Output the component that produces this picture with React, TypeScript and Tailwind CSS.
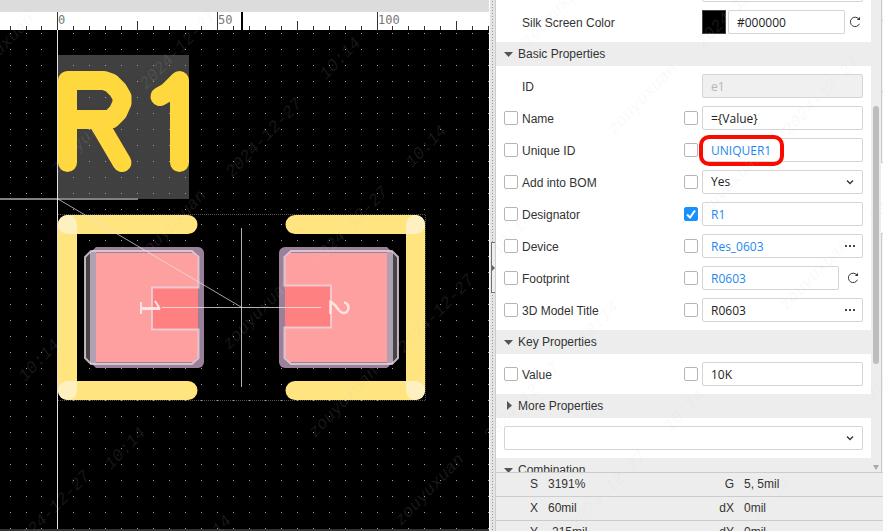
import type { ReactNode } from 'react';

const SANS = "font-['Liberation_Sans',Arial,sans-serif]";

interface Point {
  x: number;
  y: number;
}

// grid dots and ruler ticks share the same columns
const columns = Array.from({ length: 130 }, (_, i) => {
  const n = i - 3;
  const nudge = n < -1 ? 1 : n > 20 ? -1 : 0;
  return { n, x: 57 + 16 * n + nudge };
});
const rows = Array.from({ length: 90 }, (_, n) => 3 + 16 * n - (n > 11 ? 1 : 0));

function Ruler(): ReactNode {
  return (
    <svg className="block h-[18px] w-full shrink-0 bg-white" shapeRendering="crispEdges">
      {columns.map(({ n, x }) => {
        const height = n % 10 === 0 ? 18 : n % 5 === 0 ? 9 : 4;
        return <rect key={n} x={x} y={18 - height} width={1} height={height} fill="#333" />;
      })}
      {columns
        .filter(({ n }) => n >= 0 && n % 10 === 0)
        .map(({ n, x }) => (
          <text
            key={n}
            x={x + 1}
            y={12}
            fill="#777"
            className="font-['DejaVu_Sans_Mono',monospace] text-[12px]"
          >
            {n * 5}
          </text>
        ))}
      <rect x={241} y={0} width={2} height={18} fill="#000" />
    </svg>
  );
}

function Board(): ReactNode {
  return (
    <svg className="block min-h-0 w-full flex-1 bg-black">
      <rect x={58} y={25} width={131} height={144} fill="#404040" />
      <g fill="#a5a5a5" shapeRendering="crispEdges">
        {rows.map((y) =>
          columns.map(({ x }) => <rect key={`${x}-${y}`} x={x} y={y} width={1} height={1} />),
        )}
      </g>

      {/* designator strokes */}
      <g fill="none" stroke="#ffd83d" strokeWidth={19} strokeLinecap="round" strokeLinejoin="round">
        <path d="M67.500 132.500V50.500H104L111 53L118 60L122 67V73L118 82L111 89L104 89.500H67.500" />
        <path d="M97 90L122 132.500" />
        <path d="M160 66.500L168 62L179.500 50.500V132.500" />
      </g>

      {/* silk outline */}
      <path
        d="M58 184.500H425.500V370.500H58"
        fill="none"
        stroke="#555"
        strokeDasharray="1 1"
        shapeRendering="crispEdges"
      />
      <g fill="none" stroke="#ffe47f" strokeWidth={19} strokeLinecap="round" strokeLinejoin="round">
        <path d="M188 194.500H67.500V360.500H188" />
        <path d="M295 194.500H415.500V360.500H295" />
      </g>
      <g fill="#fff0c2">
        <path d="M58 194.500a9.500 9.500 0 0 1 19 0V204H67.500A9.500 9.500 0 0 1 58 194.500Z" />
        <path d="M58 360.500a9.500 9.500 0 0 0 19 0V351H67.500A9.500 9.500 0 0 0 58 360.500Z" />
        <path d="M425 194.500a9.500 9.500 0 0 0-19 0V204H415.500A9.500 9.500 0 0 0 425 194.500Z" />
        <path d="M425 360.500a9.500 9.500 0 0 1-19 0V351H415.500A9.500 9.500 0 0 1 425 360.500Z" />
      </g>

      {/* pad 1 */}
      <path d="M85 227L91 221H96V334H91L85 328Z" fill="#454545" />
      <path d="M90 223L96 217H198A6 6 0 0 1 204 223V332A6 6 0 0 1 198 338H96L90 332Z" fill="#9a8098" />
      <rect x={90} y={222} width={6} height={112} fill="#b19fb2" />
      <path d="M96 223H193L198 228V327L193 332H96Z" fill="#ffa0a0" />
      <rect x={152} y={258} width={46} height={41} fill="#ff8080" />
      <path
        d="M198.500 257.500H152V299.500H198.500V328L192 334H91L85 328V227L91 221H192L198.500 227Z"
        fill="none"
        stroke="#ead5e0"
        strokeOpacity={0.8}
        strokeWidth={2}
      />
      <g fill="none" stroke="#ffe4e4">
        <path d="M141 272V284M160 279L155 271" strokeWidth={2} />
        <path d="M141 278.500H160" strokeWidth={3} />
      </g>

      {/* pad 2 */}
      <path d="M398 227L392 221H387V334H392L398 328Z" fill="#454545" />
      <path d="M393 223L387 217H285A6 6 0 0 0 279 223V332A6 6 0 0 0 285 338H387L393 332Z" fill="#9a8098" />
      <rect x={387} y={222} width={6} height={112} fill="#b19fb2" />
      <path d="M387 223H290L285 228V327L290 332H387Z" fill="#ffa0a0" />
      <rect x={285} y={256} width={46} height={41} fill="#ff8080" />
      <path
        d="M284.500 255.500H331V297.500H284.500V328L291 334H392L398 328V227L392 221H291L284.500 227Z"
        fill="none"
        stroke="#ead5e0"
        strokeOpacity={0.8}
        strokeWidth={2}
      />
      <path
        d="M330.500 284V272C337 274 338 283 343.500 283C350 283 350 273 344 272.500"
        fill="none"
        stroke="#ffe4e4"
        strokeWidth={2.500}
      />

      {/* axes and anchor */}
      <rect x={0} y={168} width={138} height={2} fill="#808080" />
      <path d="M58 169L241 277" stroke="#e4e4e4" strokeOpacity={0.7} />
      <path d="M162 277.500H321M241.500 198V357" stroke="#eee" strokeOpacity={0.75} fill="none" />
      <rect x={57} y={0} width={1} height="100%" fill="#e6e0e0" />
    </svg>
  );
}

function Splitter(): ReactNode {
  return (
    <div className="flex w-[7px] shrink-0 items-center justify-end border-x border-l-white border-r-[#ccc] bg-[#e4e4e4] bg-[radial-gradient(circle_at_center,#999_0.5px,transparent_1px)] bg-[length:5px_3px] pt-1">
      <button
        type="button"
        aria-label="Collapse panel"
        className="flex h-[51px] w-1 items-center border-y border-l border-[#7a6f6f] bg-[#eee]"
      >
        <svg className="block h-2 w-1" viewBox="0 0 4 8">
          <path d="M0 0L4 4L0 8Z" fill="#6b6060" />
        </svg>
      </button>
    </div>
  );
}

function CheckBox({ label, checked = false }: { label: string; checked?: boolean }): ReactNode {
  return (
    <span className="grid size-3.5 shrink-0">
      <input
        type="checkbox"
        aria-label={label}
        defaultChecked={checked}
        className="peer col-start-1 row-start-1 size-3.5 appearance-none rounded-[2px] border border-[#b5b5b5] bg-white checked:border-[#1890ff] checked:bg-[#1890ff]"
      />
      <svg
        viewBox="0 0 14 14"
        className="pointer-events-none invisible col-start-1 row-start-1 size-3.5 peer-checked:visible"
      >
        <path d="M3 7.500L6 10.500L11 3.500" fill="none" stroke="#fff" strokeWidth={2} />
      </svg>
    </span>
  );
}

function RefreshIcon(): ReactNode {
  return (
    <svg viewBox="0 0 12 12" className="size-3" fill="none" stroke="#333">
      <path d="M9.800 3A4.700 4.700 0 1 0 10.400 7.800" />
      <path d="M7.800 4H11V0.800Z" fill="#333" stroke="none" />
    </svg>
  );
}

function Chevron(): ReactNode {
  return (
    <svg
      viewBox="0 0 8 6"
      className="pointer-events-none col-start-1 row-start-1 mr-[9px] h-1.5 w-2 self-center justify-self-end"
    >
      <path d="M1 1.500L4 4.500L7 1.500" fill="none" stroke="#333" strokeWidth={1.300} />
    </svg>
  );
}

const fieldBase =
  "h-6 w-full min-w-0 rounded-[2px] border border-[#d5d5d5] px-2 font-['Open_Sans','Segoe_UI',sans-serif] text-[12px] leading-4";

interface FieldProps {
  id: string;
  value: string;
  link?: boolean;
  disabled?: boolean;
}

function Field({ id, value, link, disabled }: FieldProps): ReactNode {
  const color = link
    ? 'bg-white text-[#1e88f0]'
    : disabled
      ? 'bg-[#f0f0f0] text-[#b5b5b5]'
      : 'bg-white text-[#222]';
  return (
    <input
      id={id}
      type="text"
      defaultValue={value}
      disabled={disabled}
      className={`${fieldBase} col-start-1 row-start-1 ${color}`}
    />
  );
}

function BrowseField(props: FieldProps): ReactNode {
  return (
    <div className="grid w-full">
      <Field {...props} />
      <button
        type="button"
        aria-label="Browse"
        className="col-start-1 row-start-1 mr-2 flex gap-0.5 self-center justify-self-end"
      >
        <span className="size-0.5 bg-[#444]" />
        <span className="size-0.5 bg-[#444]" />
        <span className="size-0.5 bg-[#444]" />
      </button>
    </div>
  );
}

interface SelectFieldProps {
  id: string;
  label: string;
  options: string[];
}

function SelectField({ id, label, options }: SelectFieldProps): ReactNode {
  return (
    <div className="grid w-full">
      <select
        id={id}
        aria-label={label}
        className={`${fieldBase} col-start-1 row-start-1 appearance-none bg-white text-[#222]`}
      >
        {options.map((option) => (
          <option key={option}>{option}</option>
        ))}
      </select>
      <Chevron />
    </div>
  );
}

interface PropertyRowProps {
  id: string;
  label: string;
  children: ReactNode;
  selectable?: boolean;
  checked?: boolean;
}

function PropertyRow({ id, label, children, selectable = true, checked }: PropertyRowProps): ReactNode {
  return (
    <div className="flex h-8 shrink-0 items-center px-2">
      <div className="flex w-[180px] shrink-0 items-center gap-1">
        {selectable ? <CheckBox label={`Select ${label}`} /> : <span className="w-3.5" />}
        <label htmlFor={id} className="pt-0.5">
          {label}
        </label>
      </div>
      <div className="flex min-w-0 flex-1 items-center gap-1">
        {selectable ? (
          <CheckBox label={`Show ${label}`} checked={checked} />
        ) : (
          <span className="w-3.5 shrink-0" />
        )}
        {children}
      </div>
    </div>
  );
}

function SectionHeader({ title, open = true }: { title: string; open?: boolean }): ReactNode {
  return (
    <button
      type="button"
      aria-expanded={open}
      className="flex h-6 w-full shrink-0 items-center gap-1 bg-[#ededed] pl-2 text-left"
    >
      <svg viewBox="0 0 10 10" className="size-2.5" fill="#555">
        {open ? <path d="M0 3H9L4.500 8Z" /> : <path d="M3 0V9L8 4.500Z" />}
      </svg>
      {title}
    </button>
  );
}

function SideTabs(): ReactNode {
  return (
    <div className="flex w-0.5 shrink-0 flex-col bg-[#f2f2f2]">
      <div className="h-[21px] border-b border-l border-[#ccc]" />
      <div className="h-[71px] border-b border-l border-[#ccc]" />
      <div className="h-[71px] border-b border-l border-[#ccc]" />
      <div className="h-[70px] bg-white" />
      <div className="flex-1 border-t border-l border-[#ccc]" />
    </div>
  );
}

function PropertiesPanel(): ReactNode {
  return (
    <div className="flex min-h-0 flex-1 overflow-hidden">
      <div className="flex min-w-0 flex-1 flex-col bg-white">
        <div className="flex h-1.5 shrink-0 items-end overflow-hidden">
          <div className="w-full">
            <PropertyRow id="board-color" label="" selectable={false}>
              <Field id="board-color" value="" />
            </PropertyRow>
          </div>
        </div>
        <PropertyRow id="silk-color" label="Silk Screen Color" selectable={false}>
          <div className="flex min-w-0 flex-1 gap-0.5">
            <span className="size-6 shrink-0 border border-[#444] bg-black" />
            <Field id="silk-color" value="#000000" />
          </div>
          <button type="button" aria-label="Reset color" className="mr-0.5 shrink-0">
            <RefreshIcon />
          </button>
        </PropertyRow>
        <div className="h-1 shrink-0" />

        <SectionHeader title="Basic Properties" />
        <div className="shrink-0 py-1">
          <PropertyRow id="id" label="ID" selectable={false}>
            <Field id="id" value="e1" disabled />
          </PropertyRow>
          <PropertyRow id="name" label="Name">
            <Field id="name" value="={Value}" />
          </PropertyRow>
          <PropertyRow id="unique-id" label="Unique ID">
            <div className="relative w-full">
              <Field id="unique-id" value="UNIQUER1" link />
              <span className="pointer-events-none absolute -top-[3px] -left-[3px] h-[31px] w-[85px] rounded-[10px] border-4 border-[#f90b00]" />
            </div>
          </PropertyRow>
          <PropertyRow id="bom" label="Add into BOM">
            <SelectField id="bom" label="Add into BOM" options={['Yes', 'No']} />
          </PropertyRow>
          <PropertyRow id="designator" label="Designator" checked>
            <Field id="designator" value="R1" link />
          </PropertyRow>
          <PropertyRow id="device" label="Device">
            <BrowseField id="device" value="Res_0603" link />
          </PropertyRow>
          <PropertyRow id="footprint" label="Footprint">
            <Field id="footprint" value="R0603" link />
            <button type="button" aria-label="Update footprint" className="mr-1 ml-1 shrink-0">
              <RefreshIcon />
            </button>
          </PropertyRow>
          <PropertyRow id="model" label="3D Model Title">
            <BrowseField id="model" value="R0603" />
          </PropertyRow>
        </div>

        <SectionHeader title="Key Properties" />
        <div className="shrink-0 py-1">
          <PropertyRow id="value" label="Value">
            <Field id="value" value="10K" />
          </PropertyRow>
        </div>

        <SectionHeader title="More Properties" open={false} />
        <div className="shrink-0 p-2">
          <SelectField id="more" label="More properties" options={['']} />
        </div>
        <SectionHeader title="Combination" />
      </div>

      <div className="flex w-2.5 shrink-0 flex-col items-center bg-[#ededed] pt-[106px] pb-0.5">
        <div className="h-[258px] w-1.5 shrink-0 rounded-full bg-[#bdbdbd]" />
        <svg viewBox="0 0 6 5" className="mt-auto h-[5px] w-1.5 shrink-0">
          <path d="M0 0H6L3 5Z" fill="#aaa" />
        </svg>
      </div>
      <SideTabs />
    </div>
  );
}

const status = [
  ['S', '3191%', 'G', '5, 5mil'],
  ['X', '60mil', 'dX', '0mil'],
  ['Y', '-215mil', 'dY', '0mil'],
];

function StatusPanel(): ReactNode {
  return (
    <div className="h-[59px] shrink-0 overflow-hidden bg-[#ededed]">
      {status.map(([key, value, deltaKey, delta]) => (
        <dl key={key} className="flex h-6 items-center border-t border-[#ccc] pb-0.5">
          <dt className="w-[42px] text-right">{key}</dt>
          <dd className="flex-1 pl-2.5">{value}</dd>
          <dt className="w-[42px] text-right">{deltaKey}</dt>
          <dd className="w-[149px] pl-2.5">{delta}</dd>
        </dl>
      ))}
    </div>
  );
}

const marks: { text: string; from: Point; count: number }[] = [
  { text: 'zouyuxuan', from: { x: -29, y: 86 }, count: 6 },
  { text: 'zouyuxuan', from: { x: 528, y: 47 }, count: 5 },
  { text: '2024-12-27', from: { x: 146, y: 90 }, count: 6 },
  { text: '2024-12-27', from: { x: 703, y: 48 }, count: 3 },
  { text: '2024-12-27', from: { x: 20, y: 550 }, count: 1 },
  { text: '10:14', from: { x: 326, y: 80 }, count: 6 },
  { text: '10:14', from: { x: 25, y: 382 }, count: 3 },
];

function Watermark(): ReactNode {
  return (
    <svg
      aria-hidden="true"
      className="pointer-events-none absolute inset-0 size-full font-['Liberation_Mono',monospace] text-[17px] italic"
    >
      {marks.flatMap(({ text, from, count }) =>
        Array.from({ length: count }, (_, k) => {
          const x = from.x + 86 * k;
          const y = from.y + 88 * k;
          return (
            <text key={`${text}-${x}`} x={x} y={y} transform={`rotate(-46 ${x} ${y})`} fill="#d0d0d0" fillOpacity={0.12}>
              {text}
            </text>
          );
        }),
      )}
    </svg>
  );
}

export default function App(): ReactNode {
  return (
    <main className={`relative flex h-screen overflow-hidden bg-white text-[12px] leading-4 text-[#333] ${SANS}`}>
      <section className="flex min-w-0 flex-1 flex-col">
        <div className="h-3 shrink-0 bg-[#dcdcdc]" />
        <Ruler />
        <Board />
        <div className="h-0.5 shrink-0 bg-[#333]" />
      </section>
      <Splitter />
      <aside className="flex w-[387px] shrink-0 flex-col">
        <PropertiesPanel />
        <StatusPanel />
      </aside>
      <Watermark />
    </main>
  );
}
